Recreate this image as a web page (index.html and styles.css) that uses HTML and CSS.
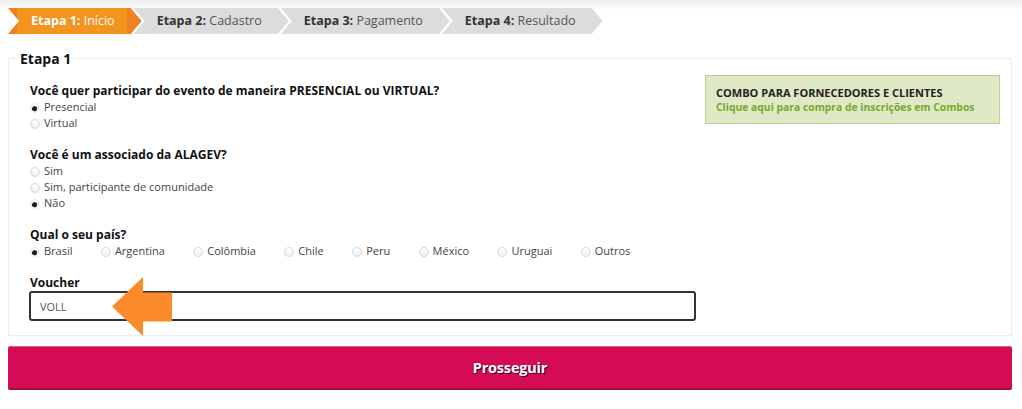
FILE: index.html
```html
<!DOCTYPE html>
<html lang="pt-BR">
<head>
<meta charset="utf-8">
<title>Inscrição - Etapa 1</title>
<link rel="stylesheet" href="styles.css">
</head>
<body>
<div class="topshade"></div>
<div class="page">
  <ol class="steps">
    <li class="step active"><b>Etapa 1:</b> Início</li>
    <li class="step"><b>Etapa 2:</b> Cadastro</li>
    <li class="step"><b>Etapa 3:</b> Pagamento</li>
    <li class="step"><b>Etapa 4:</b> Resultado</li>
  </ol>

  <fieldset class="panel">
    <legend class="panel-title">Etapa 1</legend>
    <div class="panel-grid">
      <div class="form-col">
        <div class="group">
          <div class="question">Você quer participar do evento de maneira PRESENCIAL ou VIRTUAL?</div>
          <label class="opt"><input type="radio" name="modo" checked><span>Presencial</span></label>
          <label class="opt"><input type="radio" name="modo"><span>Virtual</span></label>
        </div>
        <div class="group">
          <div class="question">Você é um associado da ALAGEV?</div>
          <label class="opt"><input type="radio" name="assoc"><span>Sim</span></label>
          <label class="opt"><input type="radio" name="assoc"><span>Sim, participante de comunidade</span></label>
          <label class="opt"><input type="radio" name="assoc" checked><span>Não</span></label>
        </div>
        <div class="group">
          <div class="question">Qual o seu país?</div>
          <div class="inline-opts">
            <label class="opt"><input type="radio" name="pais" checked><span>Brasil</span></label>
            <label class="opt"><input type="radio" name="pais"><span>Argentina</span></label>
            <label class="opt"><input type="radio" name="pais"><span>Colômbia</span></label>
            <label class="opt"><input type="radio" name="pais"><span>Chile</span></label>
            <label class="opt"><input type="radio" name="pais"><span>Peru</span></label>
            <label class="opt"><input type="radio" name="pais"><span>México</span></label>
            <label class="opt"><input type="radio" name="pais"><span>Uruguai</span></label>
            <label class="opt"><input type="radio" name="pais"><span>Outros</span></label>
          </div>
        </div>
        <div class="voucher">
          <div class="question">Voucher</div>
          <div class="input-wrap">
            <input class="text-input" type="text" value="VOLL">
            <svg class="pointer" width="60" height="59" viewBox="0 0 60 59" aria-hidden="true">
              <polygon points="0,29.5 31,0 31,15.5 60,15.5 60,44.5 31,44.5 31,59" fill="#fb8a2b"/>
            </svg>
          </div>
        </div>
      </div>
      <div class="side-col">
        <a class="combo" href="#">
          <span class="combo-title">COMBO PARA FORNECEDORES E CLIENTES</span>
          <span class="combo-link">Clique aqui para compra de inscrições em Combos</span>
        </a>
      </div>
    </div>
  </fieldset>

  <button class="submit" type="button">Prosseguir</button>
</div>
</body>
</html>
```

FILE: styles.css
```css
* { box-sizing: border-box; }

html, body {
  margin: 0;
  background: #ffffff;
}

body {
  font-family: "Open Sans", "Noto Sans", "Liberation Sans", sans-serif;
  color: #333;
  position: relative;
}

.topshade {
  position: absolute;
  left: 0;
  right: 0;
  top: 0;
  height: 10px;
  background: linear-gradient(#ededed, rgba(255,255,255,0));
}

.page {
  position: relative;
  padding: 8px 10px 0 8px;
}

/* Steps */
.steps {
  list-style: none;
  margin: 0;
  padding: 0;
  display: flex;
  height: 26px;
}

.step {
  height: 26px;
  line-height: 26px;
  padding: 0 27px 0 23px;
  margin-left: -8px;
  font-size: 12.5px;
  color: #555;
  background: #dcdcdc;
  white-space: nowrap;
  clip-path: polygon(0 0, calc(100% - 11px) 0, 100% 50%, calc(100% - 11px) 100%, 0 100%, 11px 50%);
}

.step b {
  color: #333;
  font-weight: 700;
}

.step.active {
  margin-left: 0;
  color: #fff;
  background: linear-gradient(to right, #ee7f22 0, #ee7f22 9px, #f39320 9px, #f39320 calc(100% - 15px), #ee8122 calc(100% - 15px));
}

.step.active b { color: #fff; }

/* Panel */
.panel {
  margin: 16px 0 0 0;
  padding: 8px 11px 14px 20px;
  border: 1px solid #ececec;
  min-width: 0;
}

.panel-title {
  margin-left: -11px;
  padding: 0 2px;
  font-size: 14px;
  line-height: 17px;
  font-weight: 700;
  color: #111;
}

.panel-grid {
  display: grid;
  grid-template-columns: 1fr 295px;
  column-gap: 9px;
  align-items: start;
}

.form-col {
  padding-top: 8px;
}

.group {
  margin-bottom: 16px;
}

.question {
  font-size: 12px;
  line-height: 16px;
  font-weight: 700;
  color: #111;
  padding-left: 1px;
}

.opt {
  display: flex;
  align-items: center;
  font-size: 11px;
  line-height: 16px;
  color: #444;
}

.opt input {
  -webkit-appearance: none;
  appearance: none;
  width: 10px;
  height: 10px;
  margin: 1px 4px 0 1px;
  border: 1px solid #d6d6d6;
  border-radius: 50%;
  background: linear-gradient(#ffffff, #f0f0f0);
  flex: none;
}

.opt input:checked {
  border-color: #ececec;
  background: radial-gradient(circle at 45% 60%, #1e1e1e 0, #1e1e1e 2.2px, #f4f4f4 2.9px, #f4f4f4 100%);
}

.inline-opts {
  display: flex;
  gap: 27.4px;
}

.voucher .question {
  margin-bottom: 0;
}

.input-wrap {
  position: relative;
}

.text-input {
  display: block;
  width: 100%;
  height: 30px;
  border: 2px solid #333;
  border-radius: 3px;
  padding: 0 9px;
  font-family: inherit;
  font-size: 11px;
  color: #555;
  background: #fff;
  outline: none;
}

.pointer {
  position: absolute;
  left: 83px;
  top: -14px;
  display: block;
}

/* Combo */
.combo {
  display: block;
  background: #dfe9c6;
  border: 1px solid #b9d28d;
  padding: 9px 10px 8px 10px;
  text-decoration: none;
}

.combo-title,
.combo-link {
  display: block;
  font-weight: 700;
  line-height: 15px;
  white-space: nowrap;
}

.combo-title {
  font-size: 11px;
  color: #222;
}

.combo-link {
  font-size: 10.35px;
  color: #79a82b;
}

/* Submit */
.submit {
  display: block;
  width: 100%;
  height: 44px;
  margin-top: 10px;
  border: 0;
  border-top: 1px solid #e0578a;
  border-bottom: 2px solid #a40a43;
  border-radius: 2px;
  background: #d50c55;
  color: #fff;
  font-family: inherit;
  font-size: 14.5px;
  font-weight: 700;
  letter-spacing: -0.2px;
  text-shadow: 1px 1px 0 #3a0015;
  cursor: pointer;
}
```
